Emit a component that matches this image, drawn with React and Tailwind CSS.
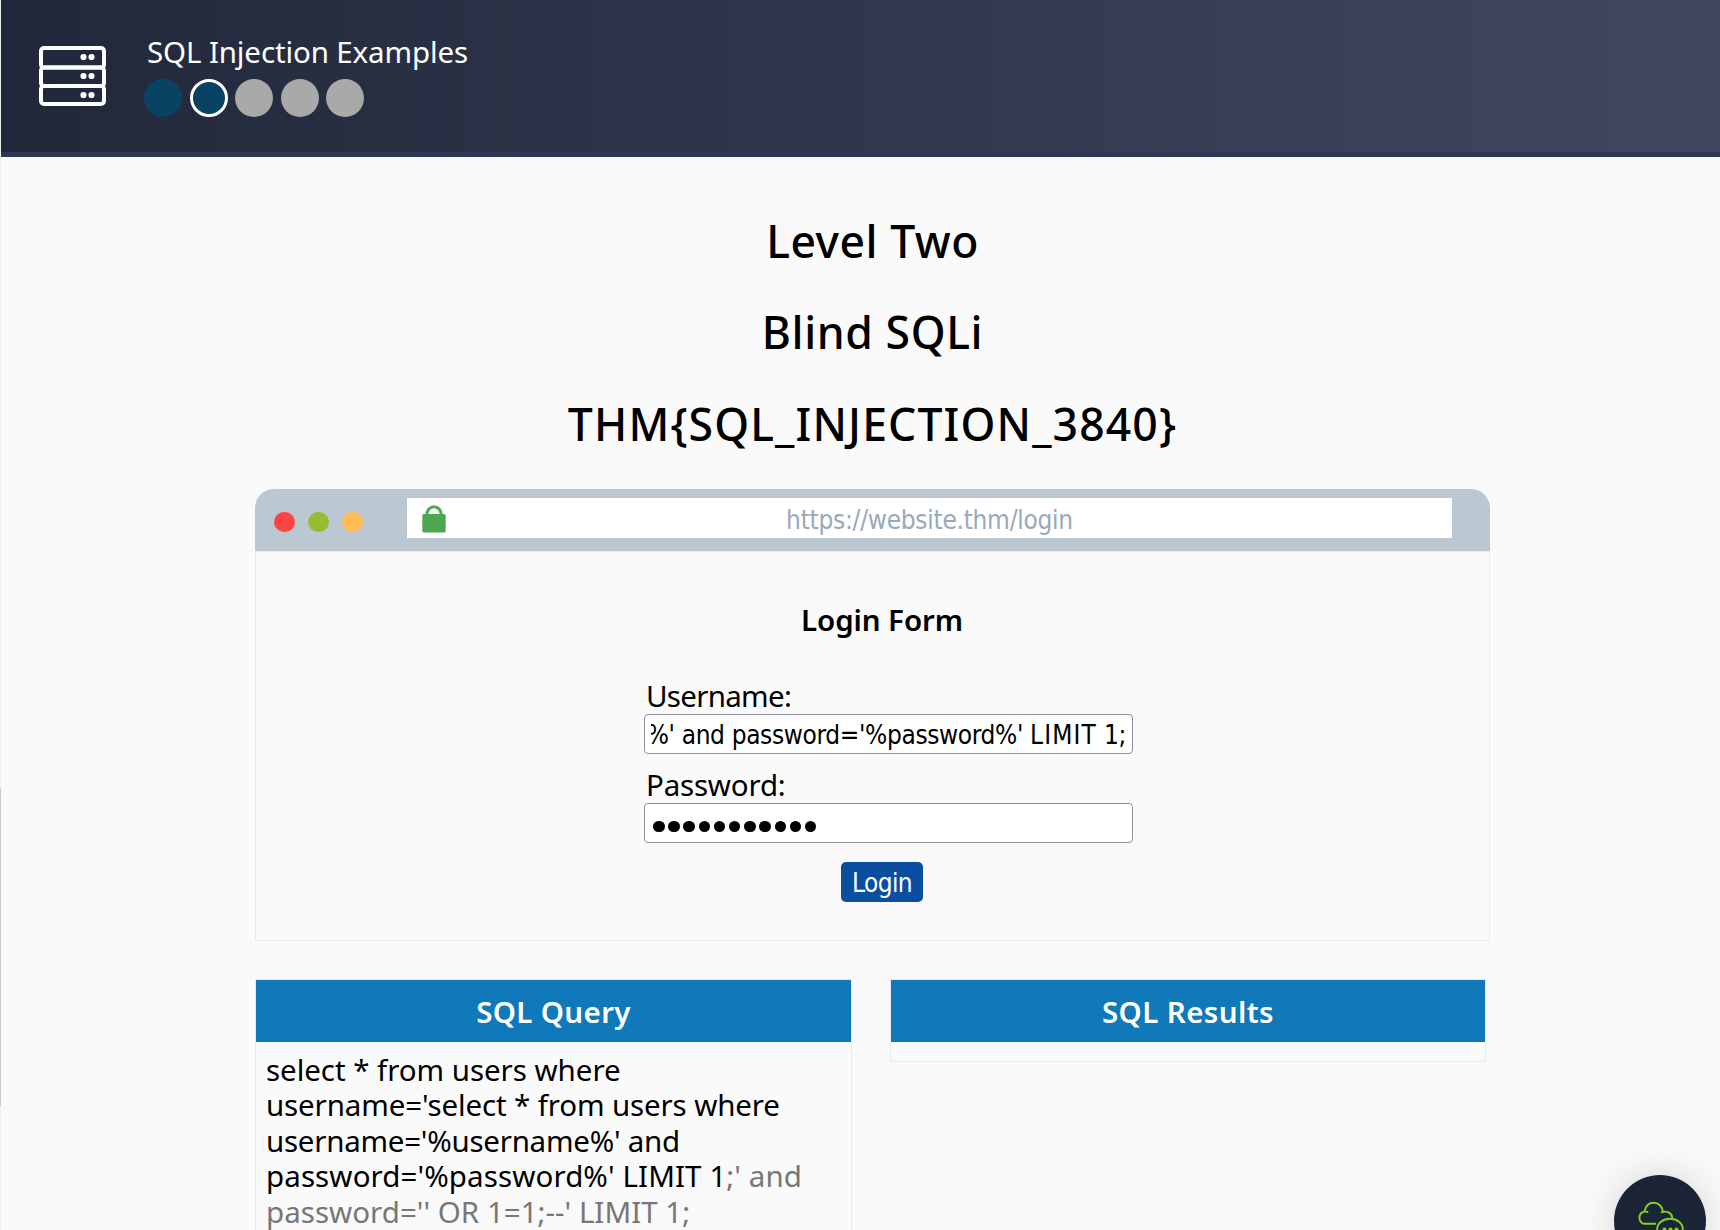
import React from "react";

const UI = "font-['Noto_Sans',sans-serif]";
const FIELD = "font-['DejaVu_Sans_Condensed','DejaVu_Sans',sans-serif] [font-stretch:condensed]";

function ServerIcon() {
  return (
    <svg width="68" height="61" viewBox="0 0 68 61" fill="none" stroke="#fff" strokeWidth="4">
      <rect x="3" y="2" width="63" height="19.5" rx="3" />
      <rect x="3" y="21.5" width="63" height="18.5" rx="3" />
      <rect x="3" y="40" width="63" height="18" rx="3" />
      <g fill="#fff" stroke="none">
        <circle cx="45.500" cy="11" r="3.1" />
        <circle cx="53.500" cy="11" r="3.1" />
        <circle cx="45.500" cy="30" r="3.1" />
        <circle cx="53.500" cy="30" r="3.1" />
        <circle cx="45.500" cy="49" r="3.1" />
        <circle cx="53.500" cy="49" r="3.1" />
      </g>
    </svg>
  );
}

function Header() {
  return (
    <header className="flex h-[157px] items-start border-b-[5px] border-[#2f3852] bg-linear-to-r from-[#22283b] to-[#404860] bg-origin-border">
      <div className="ml-[37px] mt-[46px]">
        <ServerIcon />
      </div>
      <div className="ml-[38px] mt-[34px] text-white">
        <div className="ml-[3px] text-[29.5px] leading-[36px] tracking-[-0.12px] whitespace-nowrap">SQL Injection Examples</div>
        <div className="mt-[9px] flex gap-[7.5px]">
          <span className="size-[38px] rounded-full bg-[#084364]" />
          <span className="size-[38px] rounded-full border-3 border-white bg-[#084364]" />
          <span className="size-[38px] rounded-full bg-[#a9a9a9]" />
          <span className="size-[38px] rounded-full bg-[#a9a9a9]" />
          <span className="size-[38px] rounded-full bg-[#a9a9a9]" />
        </div>
      </div>
    </header>
  );
}

function BrowserBar() {
  return (
    <div className="flex h-[62px] items-start rounded-t-[19px] bg-[#bbc7d1]">
      <div className="ml-[19px] mt-[23px] flex gap-[13px]">
        <span className="h-[20px] w-[21px] rounded-full bg-[#ff4444]" />
        <span className="h-[20px] w-[21px] rounded-full bg-[#99bb33]" />
        <span className="h-[20px] w-[21px] rounded-full bg-[#ffbb55]" />
      </div>
      <div className="ml-[44px] mt-[9px] flex h-[40px] w-[1045px] items-start bg-white">
        <svg className="ml-[15px] mt-[7px]" width="24" height="28" viewBox="0 0 24 28">
          <path d="M5 11V9a7 7.2 0 0 1 14 0v2" fill="none" stroke="#52a954" strokeWidth="3" />
          <rect x="0.3" y="9" width="23.4" height="18.6" rx="1.5" fill="#4fa650" />
        </svg>
        <div className={`${FIELD} mr-[39px] mt-[2px] flex-1 text-center text-[26px] leading-[40px] tracking-[-0.27px] text-[#98a9ba]`}>
          https://website.thm/login
        </div>
      </div>
    </div>
  );
}

function LoginForm() {
  return (
    <div className="flex h-[390px] flex-col items-center border border-[#ebebeb]">
      <h3 className="ml-[19px] mt-[50px] text-[29.5px] leading-[36px] font-semibold tracking-[-0.1px]">Login Form</h3>
      <div className="ml-[32px] mt-[40px] w-[489px]">
        <div className="ml-[2px] text-[29.5px] leading-[36px] tracking-[-0.7px]">Username:</div>
        <div className="h-[40px] rounded-[4px] border border-[#8f8f9d] bg-white px-[6px]">
          <div className={`${FIELD} flex h-[38px] justify-end overflow-hidden text-[26px] leading-[40px] tracking-[-0.36px] whitespace-nowrap`}>
            <span>
              %' and password='%password%' <span className="tracking-[1.1px]">LIMIT</span> 1;
            </span>
          </div>
        </div>
        <div className="ml-[2px] mt-[13px] text-[29.5px] leading-[36px] tracking-[-0.2px]">Password:</div>
        <div className="flex h-[40px] items-center gap-[4.2px] rounded-[4px] border border-[#8f8f9d] bg-white pt-[7px] pl-[8px]">
          {Array.from({ length: 11 }, (_, i) => (
            <span key={i} className="size-[11.5px] -mr-[0.5px] rounded-full bg-black" />
          ))}
        </div>
      </div>
      <button className={`${FIELD} ml-[19px] mt-[19px] h-[40px] w-[82px] rounded-[5px] bg-[#0a4ea2] pt-[2px] text-[26px] leading-[38px] tracking-[-0.6px] text-white`}>
        Login
      </button>
    </div>
  );
}

function Panel({ title, tracking, className, children }) {
  return (
    <section className={`border border-[#e6ebeb] ${className}`}>
      <h3 className={`h-[62px] bg-[#1079ba] text-center text-[29.5px] leading-[64px] font-semibold text-white ${tracking}`}>{title}</h3>
      {children}
    </section>
  );
}

function Chat() {
  return (
    <div className="absolute top-[1175px] left-[1614px] size-[92px] rounded-full bg-[#1c2538] shadow-[0_0_40px_rgba(0,0,0,0.15)]">
      <svg width="92" height="92" viewBox="0 0 92 92" fill="none" stroke="#84d11c" strokeWidth="1.9" strokeLinecap="round">
        <path d="M42 48.8H31a6.3 6.3 0 0 1-1.500-11.600q2.300-1 4.800-.2M31.300 36.500c1-5.500 4.600-8.800 9.200-8.800 5 0 8.600 3.800 9.200 9.200M48.500 37.300c4.800-1.800 9.800.2 10.500 5" transform="translate(-0.8 0)" />
        <ellipse cx="56" cy="54" rx="12.800" ry="10.200" />
        <g fill="#84d11c" stroke="none">
          <circle cx="50.500" cy="54.500" r="2" />
          <circle cx="56.500" cy="54.500" r="2" />
          <circle cx="62.500" cy="54.500" r="2" />
        </g>
      </svg>
    </div>
  );
}

export default function App() {
  return (
    <div className={`${UI} relative flex h-[1230px] w-[1720px] overflow-hidden bg-[#fafafa] text-black`}>
      <div className="flex w-px flex-col bg-[#efefef]">
        <div className="mt-[788px] h-[318px] bg-[#cdcdcd]" />
      </div>
      <div className="flex-1">
        <Header />
        <main className="ml-[254px] w-[1235px] pt-[57px]">
          <div className="flex flex-col items-center text-[44.5px] leading-[54px] font-medium whitespace-nowrap">
            <h1 className="tracking-[0.5px]">Level Two</h1>
            <h1 className="mt-[37px] tracking-[0.6px]">Blind SQLi</h1>
            <h1 className="mt-[38px] tracking-[1.13px]">THM&#123;SQL_INJECTION_3840&#125;</h1>
          </div>
          <div className="mt-[38px]">
            <BrowserBar />
            <LoginForm />
          </div>
          <div className="mt-[38px] flex items-start gap-[38px]">
            <Panel title="SQL Query" tracking="tracking-[0.35px]" className="w-[597px]">
              <div className="pt-[9.5px] pb-[20px] pl-[10px] text-[29.5px] leading-[35.5px] whitespace-nowrap">
                <div className="tracking-[-0.04px]">select * from users where</div>
                <div className="tracking-[-0.13px]">username='select * from users where</div>
                <div className="tracking-[-0.25px]">username='%username%' and</div>
                <div className="tracking-[0.1px]">
                  password='%password%' LIMIT 1<span className="text-[#777]">;' and</span>
                </div>
                <div className="tracking-[0.02px] text-[#777]">password='' OR 1=1;--' LIMIT 1;</div>
              </div>
            </Panel>
            <Panel title="SQL Results" tracking="tracking-[0.4px]" className="h-[83px] w-[596px]" />
          </div>
        </main>
      </div>
      <Chat />
    </div>
  );
}
